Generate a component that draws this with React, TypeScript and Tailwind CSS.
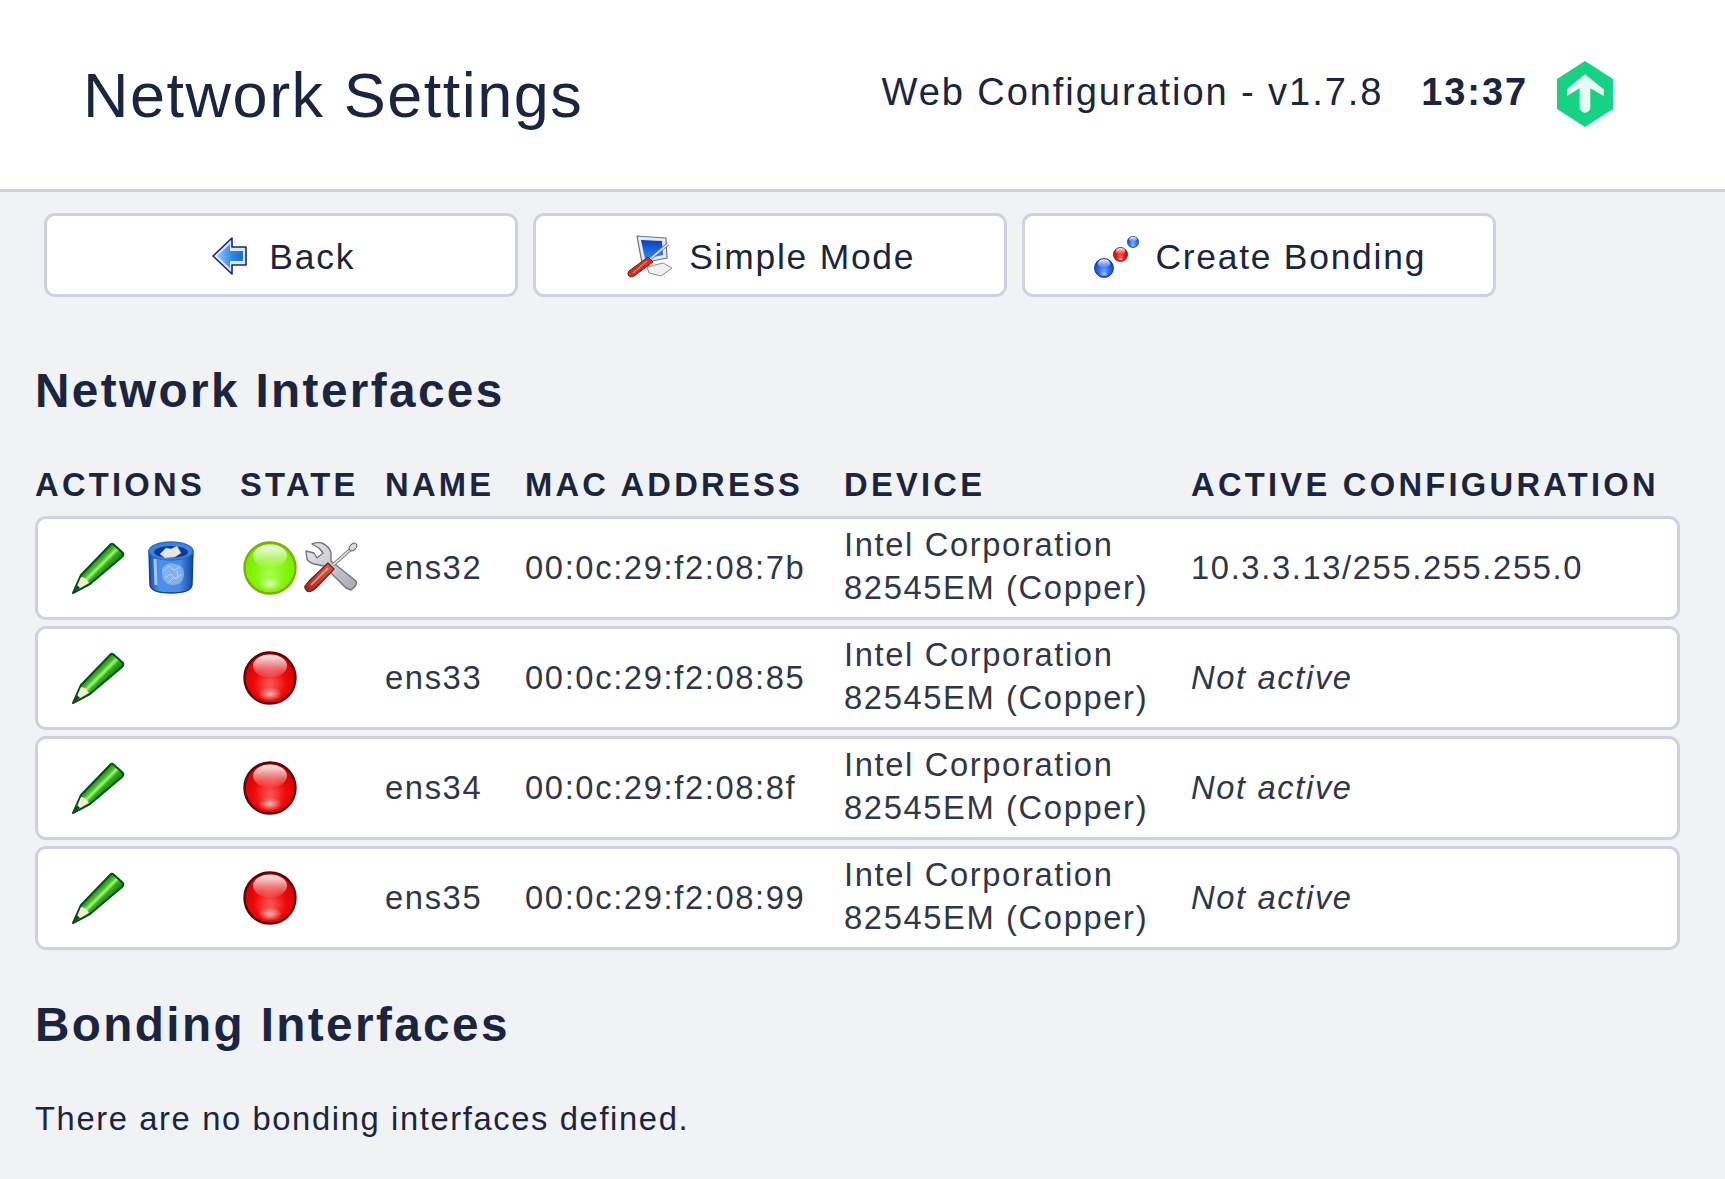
import React, { useId } from "react";

function Sphere({ c1, c2, c3, edge, size = 54, className = "" }: { c1: string; c2: string; c3: string; edge: string; size?: number; className?: string }) {
  const id = useId();
  return (
    <svg width={size} height={size} viewBox="0 0 54 54" className={className}>
      <defs>
        <radialGradient id={id + "b"} cx="50%" cy="62%" r="58%">
          <stop offset="0%" stopColor={c1} />
          <stop offset="55%" stopColor={c2} />
          <stop offset="100%" stopColor={c3} />
        </radialGradient>
        <linearGradient id={id + "h"} x1="0" y1="0" x2="0" y2="1">
          <stop offset="0%" stopColor="#fff" stopOpacity="0.95" />
          <stop offset="100%" stopColor="#fff" stopOpacity="0.05" />
        </linearGradient>
        <radialGradient id={id + "l"} cx="50%" cy="50%" r="50%">
          <stop offset="0%" stopColor="#fff" stopOpacity="0.65" />
          <stop offset="100%" stopColor="#fff" stopOpacity="0" />
        </radialGradient>
      </defs>
      <circle cx="27" cy="27" r="25.5" fill={`url(#${id}b)`} stroke={edge} strokeWidth="2.4" />
      <ellipse cx="27" cy="15" rx="17" ry="11.5" fill={`url(#${id}h)`} />
      <ellipse cx="27" cy="43" rx="12" ry="7" fill={`url(#${id}l)`} />
    </svg>
  );
}

const GreenDot = () => <Sphere c1="#aaff50" c2="#84f40a" c3="#74ea00" edge="#7cb000" />;
const RedDot = () => <Sphere c1="#ff5a5a" c2="#ee0808" c3="#d00000" edge="#5e0606" />;

function Pencil() {
  const id = useId();
  return (
    <svg width="54" height="54" viewBox="0 0 54 54" className="shrink-0 -ml-[1px]">
      <defs>
        <linearGradient id={id} gradientUnits="userSpaceOnUse" x1="21" y1="19" x2="35" y2="33">
          <stop offset="0%" stopColor="#0a7a06" />
          <stop offset="35%" stopColor="#3fc020" />
          <stop offset="50%" stopColor="#a8f080" />
          <stop offset="65%" stopColor="#30b015" />
          <stop offset="100%" stopColor="#0b7d08" />
        </linearGradient>
      </defs>
      <path d="M42 3 L52 12 Q53 14 51 16 L19 43 L2 52 L10 34 L39 4 Q41 2 42 3 Z" fill={`url(#${id})`} stroke="#0a4a24" strokeWidth="2" strokeLinejoin="round" />
      <path d="M10 36 Q15 36 18 42 L4 50 Z" fill="#f4ecd0" />
      <path d="M6 44 L9 47 L2 52 Z" fill="#124a12" />
    </svg>
  );
}

function Trash() {
  const id = useId();
  return (
    <svg width="48" height="54" viewBox="0 0 48 54" className="shrink-0">
      <defs>
        <linearGradient id={id} x1="0" y1="0" x2="1" y2="0">
          <stop offset="0%" stopColor="#0f50b4" />
          <stop offset="22%" stopColor="#4a90ea" />
          <stop offset="70%" stopColor="#4a8ce6" />
          <stop offset="100%" stopColor="#0f46a4" />
        </linearGradient>
      </defs>
      <path d="M2 10 L3 44 Q4 52 24 52 Q44 52 45 44 L46 10 Z" fill={`url(#${id})`} stroke="#123f90" strokeWidth="1.4" />
      <ellipse cx="24" cy="10" rx="22" ry="9" fill="#3a84e6" stroke="#2a6cc8" strokeWidth="1.4" />
      <ellipse cx="24" cy="11" rx="17" ry="6" fill="#0f3a92" />
      <path d="M13 13 L19 7 L24 8 L30 5 L34 12 L28 16 L18 17 Z" fill="#e6e6e6" stroke="#aaa" strokeWidth="0.5" />
      <path d="M15 28 Q20 20 28 23 Q38 24 37 35 Q35 45 24 44 Q14 42 15 28 Z" fill="#bcd4ee" opacity="0.5" />
      <path d="M17 30 L22 25 L27 29 L33 26 M18 37 L24 33 L28 38 L35 33 M22 41 L27 36 M30 30 L31 37" stroke="#eaf2fb" strokeWidth="1" fill="none" opacity="0.5" />
      <path d="M8 18 L9 44" stroke="#d6e6fa" strokeWidth="3" opacity="0.7" />
    </svg>
  );
}

function Tools() {
  const id = useId();
  return (
    <svg width="54" height="54" viewBox="0 0 54 54" className="shrink-0">
      <defs>
        <linearGradient id={id} x1="0" y1="0" x2="1" y2="1">
          <stop offset="0%" stopColor="#e8e8ee" />
          <stop offset="100%" stopColor="#a8a8b4" />
        </linearGradient>
        <linearGradient id={id + "r"} x1="0" y1="1" x2="1" y2="0">
          <stop offset="0%" stopColor="#a82418" />
          <stop offset="100%" stopColor="#d8604c" />
        </linearGradient>
      </defs>
      <path d="M8 3 Q13 1 18 2 Q26 6 27 12 L27 20 L52 40 Q54 44 47 49 L42 47 L20 25 L10 23 Q4 21 3 18 L2 10 L10 12 L13 17 L19 12 L15 7 Z" fill={`url(#${id})`} stroke="#74747e" strokeWidth="1.4" strokeLinejoin="round" />
      <path d="M29 24 L47 8" stroke="#77777f" strokeWidth="3.6" />
      <path d="M29 24 L47 8" stroke="#d8d8de" strokeWidth="1.8" />
      <ellipse cx="49" cy="6" rx="3" ry="4.4" transform="rotate(45 49 6)" fill="#dadade" stroke="#666" strokeWidth="1" />
      <path d="M24 22 L30 28 L12 47 Q6 52 3 50 Q0 47 1 45 L5 40 Z" fill={`url(#${id + "r"})`} stroke="#7a1a14" strokeWidth="1.2" strokeLinejoin="round" />
      <path d="M7 44 L24 27" stroke="#f2b0a0" strokeWidth="1.8" opacity="0.7" />
    </svg>
  );
}

function BackArrow() {
  const id = useId();
  return (
    <span className="pl-[2.5px] pr-[5.5px] mt-[2px] shrink-0 flex">
      <svg width="36" height="38" viewBox="0 0 36 38">
        <defs>
          <linearGradient id={id} x1="0" y1="0" x2="1" y2="0">
            <stop offset="0%" stopColor="#8ec8fa" />
            <stop offset="60%" stopColor="#2f86e8" />
            <stop offset="100%" stopColor="#1e6cd0" />
          </linearGradient>
        </defs>
        <path d="M20 1 L20 10 L34 10 L34 28 L20 28 L20 37 L1 19 Z" fill="#e4e8f2" stroke="#10209a" strokeWidth="1.6" strokeLinejoin="round" />
        <path d="M18 7 L18 14 L31 14 L31 24 L18 24 L18 31 L5 19 Z" fill={`url(#${id})`} />
      </svg>
    </span>
  );
}

function MonitorTool() {
  const id = useId();
  return (
    <svg width="46" height="44" viewBox="0 0 46 44" className="shrink-0 mt-[2px]">
      <defs>
        <linearGradient id={id} x1="0" y1="0" x2="0" y2="1">
          <stop offset="0%" stopColor="#0a3cc0" />
          <stop offset="100%" stopColor="#2a8cf0" />
        </linearGradient>
      </defs>
      <path d="M10 2 L39 4 L40 24 L15 29 Z" fill="#e6e9ef" stroke="#6a727e" strokeWidth="1.2" strokeLinejoin="round" />
      <path d="M14 6 L35 7 L36 21 L18 25 Z" fill={`url(#${id})`} />
      <path d="M20 33 L36 29 L45 34 L34 42 L22 39 Z" fill="#eef0f3" stroke="#8a8e98" strokeWidth="1" strokeLinejoin="round" />
      <path d="M22 26 L41 10" stroke="#7c7c84" strokeWidth="3" />
      <path d="M22 26 L41 10" stroke="#eeeef2" strokeWidth="1.3" />
      <path d="M21 23 L26 28 L7 42 Q3 44 1.5 41.5 Q0 39 2 37 Z" fill="#c83426" stroke="#7a1812" strokeWidth="1" strokeLinejoin="round" />
      <path d="M6 39 L20 27" stroke="#f0a090" strokeWidth="1.3" opacity="0.7" />
    </svg>
  );
}

function BondIcon() {
  return (
    <div className="relative w-[45px] h-[42px] mt-[4px] shrink-0">
      <Sphere size={20} c1="#6aa8ff" c2="#2a62f0" c3="#1040d0" edge="#0c2a90" className="absolute left-0 bottom-0" />
      <Sphere size={15} c1="#ff6060" c2="#ee1010" c3="#c40000" edge="#601010" className="absolute left-[19px] top-[11px]" />
      <Sphere size={12} c1="#7ab0ff" c2="#3070f0" c3="#1848d0" edge="#102c90" className="absolute left-[33px] top-0" />
    </div>
  );
}

function Logo() {
  return (
    <svg width="60" height="68" viewBox="0 0 60 68" className="shrink-0">
      <path d="M30 1 L58 19 L58 49 L30 67 L2 49 L2 19 Z" fill="#16d284" />
      <path d="M30 14.3 L48.7 29.3 L48.7 36 L35.3 28.3 L35.3 49 Q33 52.7 30 52.7 Q27 52.7 24.7 49 L24.7 28.3 L12 36 L12 29.3 Z" fill="#e8fbf3" />
    </svg>
  );
}

function ActionButton({ icon, label }: { icon: React.ReactNode; label: string }) {
  return (
    <button className="w-[473.5px] h-[84px] pl-[3px] rounded-[11px] border-[3px] border-[#cfd1e0] bg-white flex items-center justify-center gap-[16px] text-[35.4px] tracking-[0.05em] text-[#1a2540]">
      {icon}
      <span className="pt-[5px]">{label}</span>
    </button>
  );
}

const COLS = "grid grid-cols-[205px_145px_140px_319px_347px_1fr] items-center";
const ROW = "grid grid-cols-[202px_145px_140px_319px_347px_1fr] items-center h-[103.5px] bg-white rounded-[11px] border-[3px] border-[#cfd1e0]";

const rows = [
  { name: "ens32", mac: "00:0c:29:f2:08:7b", active: "10.3.3.13/255.255.255.0", up: true },
  { name: "ens33", mac: "00:0c:29:f2:08:85", active: "Not active", up: false },
  { name: "ens34", mac: "00:0c:29:f2:08:8f", active: "Not active", up: false },
  { name: "ens35", mac: "00:0c:29:f2:08:99", active: "Not active", up: false },
];

export default function App() {
  return (
    <div className="w-[1725px] h-[1179px] overflow-hidden bg-[#f1f2f4] font-['Liberation_Sans',sans-serif] text-[#1a2540]">
      <header className="h-[192px] bg-white border-b-[3px] border-[#cfd1e0] flex items-center justify-between pl-[83px] pr-[110px]">
        <h1 className="text-[63px] tracking-[0.024em] font-normal leading-none mt-[2px]">Network Settings</h1>
        <div className="flex items-center -mt-[5px]">
          <span className="text-[38.1px] tracking-[0.05em] pt-[2px]">Web Configuration - v1.7.8</span>
          <span className="text-[38px] tracking-[0.05em] font-bold ml-[38px]">13:37</span>
          <div className="ml-[27px] mt-[3px]"><Logo /></div>
        </div>
      </header>

      <div className="flex gap-[15.5px] pl-[44px] pt-[21px]">
        <ActionButton icon={<BackArrow />} label="Back" />
        <ActionButton icon={<MonitorTool />} label="Simple Mode" />
        <ActionButton icon={<BondIcon />} label="Create Bonding" />
      </div>

      <main className="pl-[35px] pr-[45px]">
        <h2 className="text-[47.7px] font-bold tracking-[0.05em] leading-[48px] mt-[70px]">Network Interfaces</h2>

        <div className={`${COLS} mt-[50px] text-[32.7px] font-bold tracking-[0.1em] uppercase leading-[40px]`}>
          <div>Actions</div>
          <div>State</div>
          <div>Name</div>
          <div>MAC Address</div>
          <div>Device</div>
          <div>Active Configuration</div>
        </div>

        <div className="flex flex-col gap-[6.5px] mt-[11px] text-[32.7px] tracking-[0.05em] text-[#2f3747]">
          {rows.map((r) => (
            <div key={r.name} className={ROW}>
              <div className="flex items-center gap-[22px] pl-[34px]">
                <Pencil />
                {r.up && <Trash />}
              </div>
              <div className="flex items-center gap-[7px] pl-[2.5px]">
                {r.up ? <GreenDot /> : <RedDot />}
                {r.up && <Tools />}
              </div>
              <div>{r.name}</div>
              <div>{r.mac}</div>
              <div className="leading-[43px] -mt-[3px]">Intel Corporation<br />82545EM (Copper)</div>
              <div className={r.up ? "" : "italic"}>{r.active}</div>
            </div>
          ))}
        </div>

        <h2 className="text-[47.7px] font-bold tracking-[0.05em] leading-[48px] mt-[51.5px]">Bonding Interfaces</h2>
        <p className="text-[32.7px] tracking-[0.05em] mt-[50px] leading-[40px]">There are no bonding interfaces defined.</p>
      </main>
    </div>
  );
}
